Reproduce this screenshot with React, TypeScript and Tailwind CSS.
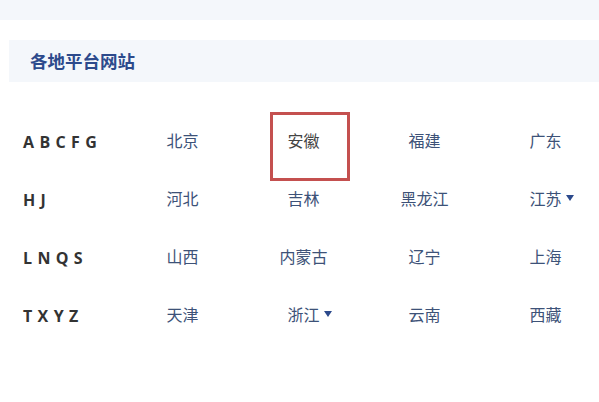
const rows: { letters: string; cities: { name: string; more?: boolean; picked?: boolean }[] }[] = [
  { letters: "A B C F G", cities: [{ name: "北京" }, { name: "安徽", picked: true }, { name: "福建" }, { name: "广东" }] },
  { letters: "H J", cities: [{ name: "河北" }, { name: "吉林" }, { name: "黑龙江" }, { name: "江苏", more: true }] },
  { letters: "L N Q S", cities: [{ name: "山西" }, { name: "内蒙古" }, { name: "辽宁" }, { name: "上海" }] },
  { letters: "T X Y Z", cities: [{ name: "天津" }, { name: "浙江", more: true }, { name: "云南" }, { name: "西藏" }] },
];

export default function App() {
  return (
    <div
      className="w-[599px] h-[402px] bg-white overflow-hidden"
      style={{ fontFamily: '"Noto Sans CJK SC", "Noto Sans", sans-serif' }}
    >
      <div className="h-[20px] bg-[#f4f7fb]" />
      <div className="mt-[20px] ml-[9px] h-[42px] bg-[#f4f7fb] flex items-center pl-[21px]">
        <h2 className="text-[17.5px] font-bold text-[#2c4a8c] leading-none">各地平台网站</h2>
      </div>

      <div className="mt-[29px] ml-[9px] grid grid-cols-[113px_repeat(4,121px)]">
        {rows.map((row) => (
          <div key={row.letters} className="contents">
            <div
              className="h-[58px] flex items-center pl-[14px] pt-[3px] text-[16px] font-bold text-[#333] tracking-[0.6px]"
              style={{ fontFamily: '"Open Sans", "Noto Sans", sans-serif' }}
            >
              {row.letters}
            </div>
            {row.cities.map((c) => (
              <div key={c.name} className="relative h-[58px] flex items-center justify-center">
                {c.picked && (
                  <div className="absolute left-[27px] top-[1px] w-[80px] h-[69px] border-[3px] border-[#c4504f]" />
                )}
                <span className={`relative text-[16px] ${c.picked ? "text-[#444]" : "text-[#3d5278]"}`}>
                  {c.name}
                  {c.more && (
                    <span className="absolute left-full top-1/2 -translate-y-1/2 ml-[4px] w-0 h-0 border-l-[4px] border-r-[4px] border-t-[6px] border-l-transparent border-r-transparent border-t-[#2c4a8c]" />
                  )}
                </span>
              </div>
            ))}
          </div>
        ))}
      </div>
    </div>
  );
}
